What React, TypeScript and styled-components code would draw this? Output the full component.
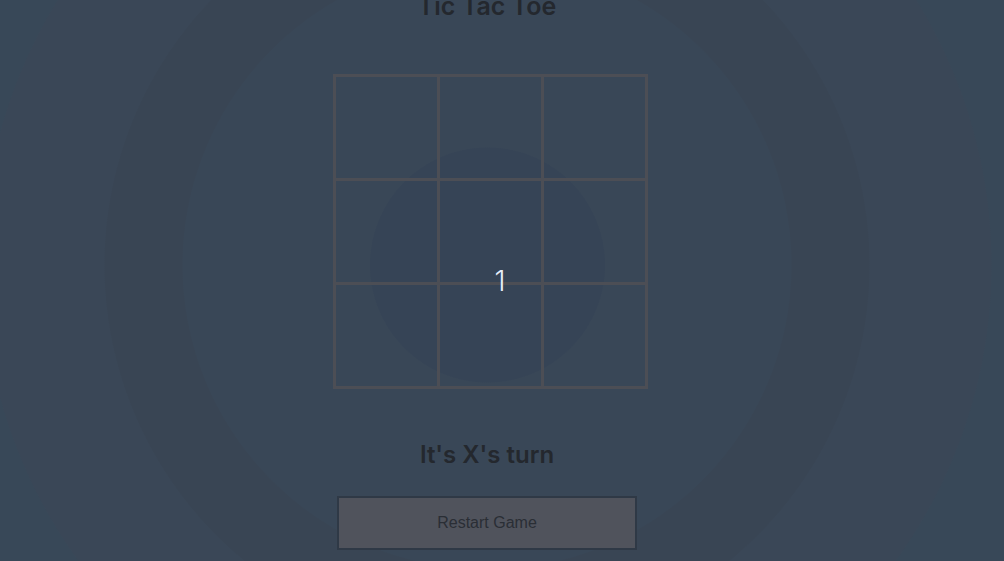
import React from "react";
import styled, { createGlobalStyle, css } from "styled-components";

const rings = css`
  radial-gradient(circle at 487px 265px,
    #364456 0, #364456 117px,
    #394757 118px, #394757 304px,
    #394554 305px, #394554 382px,
    #3a4757 383px, #3a4757 504px,
    #384858 505px)
`;

const Global = createGlobalStyle`
  html, body { margin: 0; padding: 0; }
  body {
    width: 1004px;
    height: 561px;
    overflow: hidden;
    background: ${rings};
  }
`;

const Page = styled.main`
  width: 974px;
  display: flex;
  flex-direction: column;
  align-items: center;
  font-family: "Inter", "Noto Sans", sans-serif;
`;

const Title = styled.h1`
  margin: -9px 0 0;
  font-size: 25px;
  line-height: 30px;
  font-weight: 600;
  color: #24282e;
`;

const Board = styled.div`
  position: relative;
  margin-top: 53px;
  margin-left: 6px;
  display: grid;
  grid-template-columns: repeat(3, 101px);
  grid-template-rows: repeat(3, 101px);
  gap: 3px;
  padding: 3px;
  background: #4c4e55;
`;

const Cell = styled.div`
  background: ${rings} fixed;
`;

const Counter = styled.span`
  position: absolute;
  left: 162px;
  top: 191px;
  font-size: 28px;
  line-height: 32px;
  color: #e6eefa;
  font-weight: 300;
`;

const Status = styled.h2`
  margin: 51px 0 0;
  font-size: 24px;
  line-height: 30px;
  font-weight: 600;
  color: #24282e;
`;

const RestartButton = styled.button`
  margin-top: 26px;
  width: 300px;
  height: 54px;
  background: #50535c;
  border: 2px solid #2f3946;
  font-family: "Liberation Sans", Arial, sans-serif;
  font-size: 16px;
  color: #2a2e35;
`;

export default function App() {
  const cells = Array.from({ length: 9 });
  return (
    <>
      <Global />
      <Page>
        <Title>Tic Tac Toe</Title>
        <Board>
          {cells.map((_, i) => (
            <Cell key={i} />
          ))}
          <Counter>1</Counter>
        </Board>
        <Status>It's X's turn</Status>
        <RestartButton>Restart Game</RestartButton>
      </Page>
    </>
  );
}
